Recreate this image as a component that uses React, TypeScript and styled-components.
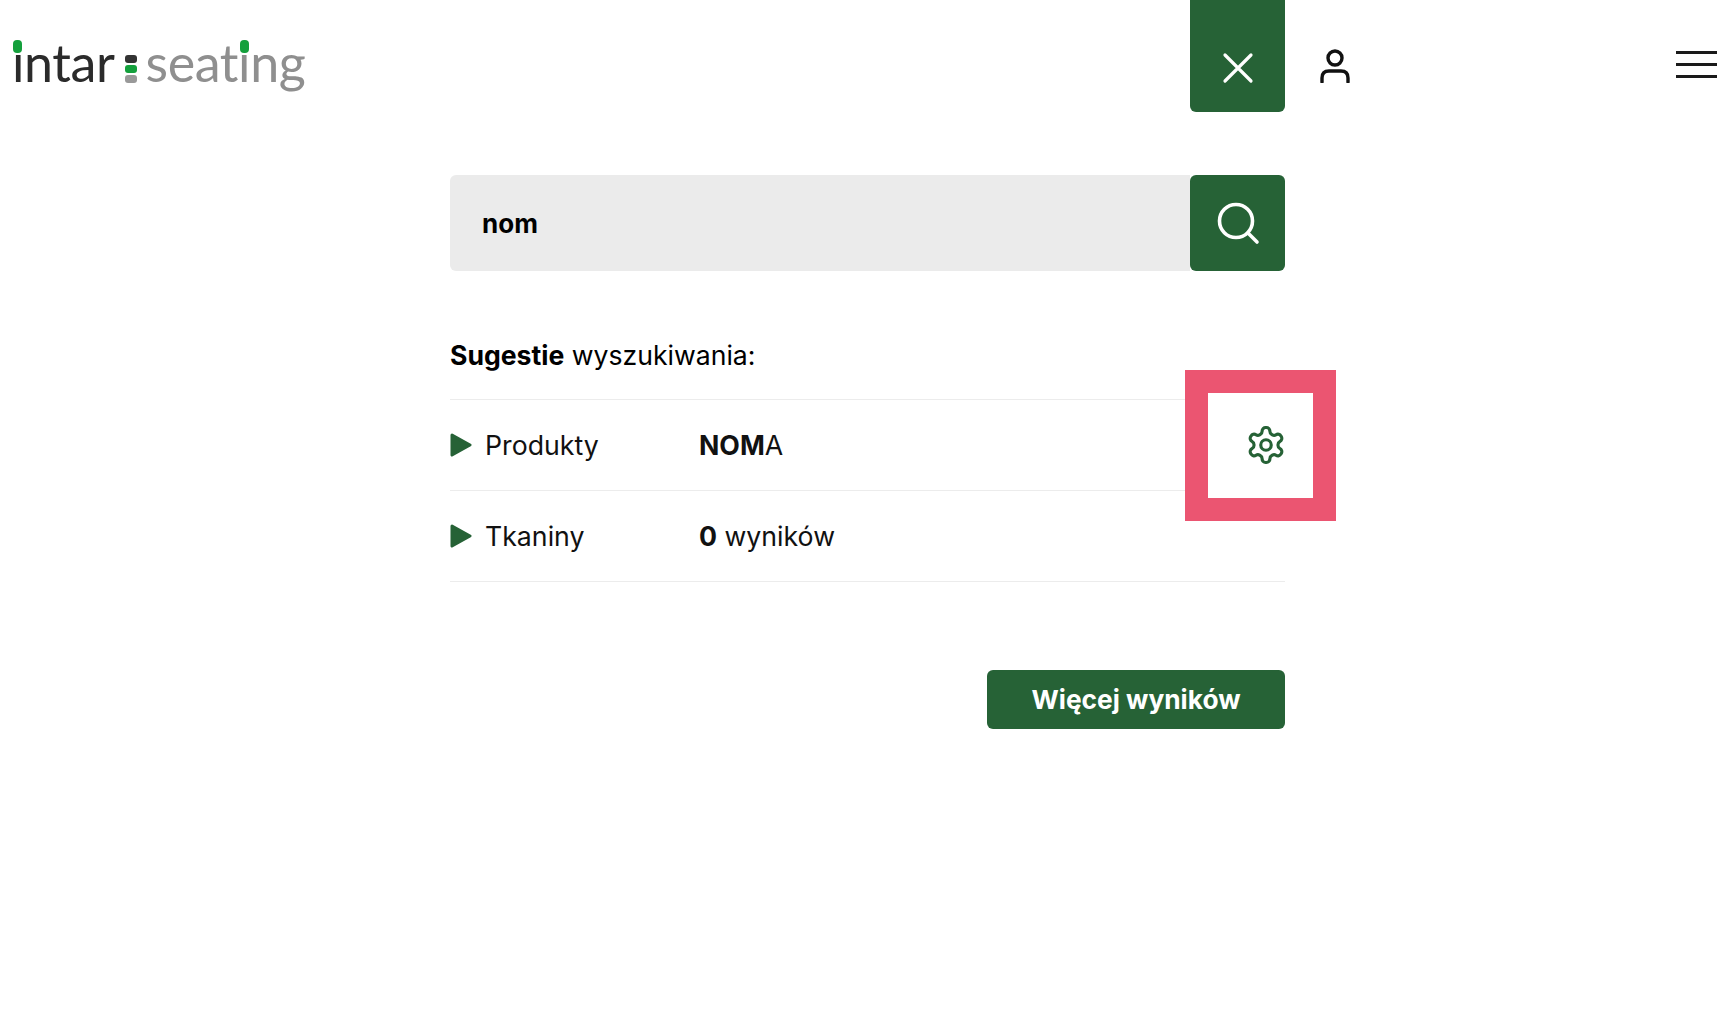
import React from "react";
import styled, { createGlobalStyle } from "styled-components";

const GREEN = "#266236";

const Global = createGlobalStyle`
  html, body { margin: 0; padding: 0; background: #fff; }
  body { font-family: Inter, "Liberation Sans", sans-serif; color: #000; }
`;

const Page = styled.div`
  position: relative;
  width: 1725px;
  height: 1021px;
  overflow: hidden;
`;

const Header = styled.header`
  display: grid;
  grid-template-columns: 1190px 95px 100px 1fr;
  height: 112px;
`;

const Logo = styled.div`
  position: relative;
  padding: 32px 0 0 12px;
  display: flex;
  align-items: flex-start;
  font-family: Lato, sans-serif;
  font-size: 52px;
  line-height: 60px;
  letter-spacing: -0.4px;
  height: 60px;
`;

const LogoDark = styled.span`
  color: #2b2b2b;
`;

const LogoGrey = styled.span`
  color: #8f8f8f;
  margin-left: 9px;
`;

const LogoMark = styled.span`
  display: flex;
  flex-direction: column;
  gap: 2px;
  margin: 23px 0 0 10px;
`;

const LogoPip = styled.i<{ $c: string }>`
  display: block;
  width: 12px;
  height: 8px;
  border-radius: 3px;
  background: ${(p) => p.$c};
`;

const LogoDot = styled.i<{ $x: number }>`
  position: absolute;
  left: ${(p) => p.$x}px;
  top: 40px;
  width: 9px;
  height: 13px;
  border-radius: 4px;
  background: #14a03c;
`;

const CloseButton = styled.button`
  background: ${GREEN};
  border: 0;
  padding: 24px 0 0;
  border-radius: 0 0 6px 6px;
  height: 112px;
  display: flex;
  align-items: center;
  justify-content: center;
`;

const UserSlot = styled.div`
  padding: 47px 0 0 34px;
`;

const MenuSlot = styled.div`
  padding: 51px 0 0 291px;
  display: flex;
  flex-direction: column;
  gap: 9px;
`;

const MenuLine = styled.span`
  display: block;
  width: 41px;
  height: 3px;
  background: #1a1a1a;
`;

const Main = styled.main`
  width: 835px;
  margin: 63px 0 0 450px;
`;

const SearchRow = styled.div`
  display: flex;
  height: 96px;
`;

const SearchInput = styled.div`
  flex: 1;
  background: #ebebeb;
  border-radius: 6px 0 0 6px;
  padding: 1px 0 0 32px;
  display: flex;
  align-items: center;
  font-size: 26px;
  font-weight: 700;
  color: #000;
`;

const SearchButton = styled.button`
  width: 95px;
  background: ${GREEN};
  border: 0;
  padding: 0;
  border-radius: 6px;
  display: flex;
  align-items: center;
  justify-content: center;
`;

const Heading = styled.h2`
  margin: 68px 0 0;
  font-size: 26.6px;
  line-height: 32px;
  font-weight: 400;
  height: 60px;
  color: #000;
`;

const Row = styled.div`
  display: grid;
  grid-template-columns: 35px 214px 1fr auto;
  align-items: center;
  height: 90px;
  border-top: 1px solid #ececec;
  font-size: 26.7px;
  color: #111;
`;

const List = styled.div`
  border-bottom: 1px solid #ececec;
`;

const Arrow = styled.svg`
  display: block;
`;

const Value = styled.span`
  white-space: nowrap;
`;

const Actions = styled.div`
  display: flex;
  justify-content: flex-end;
  margin-top: 88px;
`;

const MoreButton = styled.button`
  width: 298px;
  height: 59px;
  background: ${GREEN};
  color: #fff;
  border: 0;
  border-radius: 6px;
  font-family: inherit;
  font-size: 26.3px;
  font-weight: 700;
`;

const Highlight = styled.div`
  position: absolute;
  left: 1185px;
  top: 370px;
  width: 105px;
  height: 105px;
  border: 23px solid #eb5571;
  display: flex;
  align-items: center;
  justify-content: center;
  background: #fff;
`;

const GearIcon = styled.svg`
  position: relative;
  left: 5px;
  top: -1px;
`;

const TriangleIcon = () => (
  <Arrow width="22" height="24" viewBox="0 0 22 24">
    <path d="M2 2 L20 12 L2 22 Z" fill={GREEN} stroke={GREEN} strokeWidth="3" strokeLinejoin="round" />
  </Arrow>
);

export default function App() {
  return (
    <Page>
      <Global />
      <Header>
        <Logo>
          <LogoDark>intar</LogoDark>
          <LogoMark>
            <LogoPip $c="#333" />
            <LogoPip $c="#14a03c" />
            <LogoPip $c="#999" />
          </LogoMark>
          <LogoGrey>seating</LogoGrey>
          <LogoDot $x={13} />
          <LogoDot $x={240} />
        </Logo>
        <CloseButton aria-label="Zamknij">
          <svg width="32" height="32" viewBox="0 0 32 32" fill="none" stroke="#fff" strokeWidth="3.2" strokeLinecap="round">
            <path d="M3 3 L29 29 M29 3 L3 29" />
          </svg>
        </CloseButton>
        <UserSlot>
          <svg width="34" height="36" viewBox="0 0 34 36" fill="none" stroke="#111" strokeWidth="3.4" strokeLinecap="round">
            <circle cx="16" cy="11" r="7" />
            <path d="M3 35 V31 C3 26 6 24 10 24 H22 C26 24 29 26 29 31 V35" />
          </svg>
        </UserSlot>
        <MenuSlot>
          <MenuLine />
          <MenuLine />
          <MenuLine />
        </MenuSlot>
      </Header>
      <Main>
        <SearchRow>
          <SearchInput>nom</SearchInput>
          <SearchButton aria-label="Szukaj">
            <svg width="44" height="44" viewBox="0 0 44 44" fill="none" stroke="#fff" strokeWidth="3.6" strokeLinecap="round">
              <circle cx="20" cy="20" r="16.5" />
              <path d="M32 32 L41 41" />
            </svg>
          </SearchButton>
        </SearchRow>
        <Heading>
          <b>Sugestie</b> wyszukiwania:
        </Heading>
        <List>
          <Row>
            <TriangleIcon />
            <span>Produkty</span>
            <Value>
              <b>NOM</b>A
            </Value>
          </Row>
          <Row>
            <TriangleIcon />
            <span>Tkaniny</span>
            <Value>
              <b>0</b> wyników
            </Value>
          </Row>
        </List>
        <Actions>
          <MoreButton>Więcej wyników</MoreButton>
        </Actions>
      </Main>
      <Highlight>
        <GearIcon width="42" height="42" viewBox="0 0 24 24" fill="none" stroke={GREEN} strokeWidth="1.8" strokeLinecap="round" strokeLinejoin="round">
          <path d="M12.22 2h-.44a2 2 0 0 0-2 2v.18a2 2 0 0 1-1 1.73l-.43.25a2 2 0 0 1-2 0l-.15-.08a2 2 0 0 0-2.73.73l-.22.38a2 2 0 0 0 .73 2.73l.15.1a2 2 0 0 1 1 1.72v.51a2 2 0 0 1-1 1.74l-.15.09a2 2 0 0 0-.73 2.73l.22.38a2 2 0 0 0 2.73.73l.15-.08a2 2 0 0 1 2 0l.43.25a2 2 0 0 1 1 1.73V20a2 2 0 0 0 2 2h.44a2 2 0 0 0 2-2v-.18a2 2 0 0 1 1-1.73l.43-.25a2 2 0 0 1 2 0l.15.08a2 2 0 0 0 2.73-.73l.22-.39a2 2 0 0 0-.73-2.73l-.15-.08a2 2 0 0 1-1-1.74v-.5a2 2 0 0 1 1-1.74l.15-.09a2 2 0 0 0 .73-2.73l-.22-.38a2 2 0 0 0-2.73-.73l-.15.08a2 2 0 0 1-2 0l-.43-.25a2 2 0 0 1-1-1.73V4a2 2 0 0 0-2-2z" />
          <circle cx="12" cy="12" r="3" />
        </GearIcon>
      </Highlight>
    </Page>
  );
}
